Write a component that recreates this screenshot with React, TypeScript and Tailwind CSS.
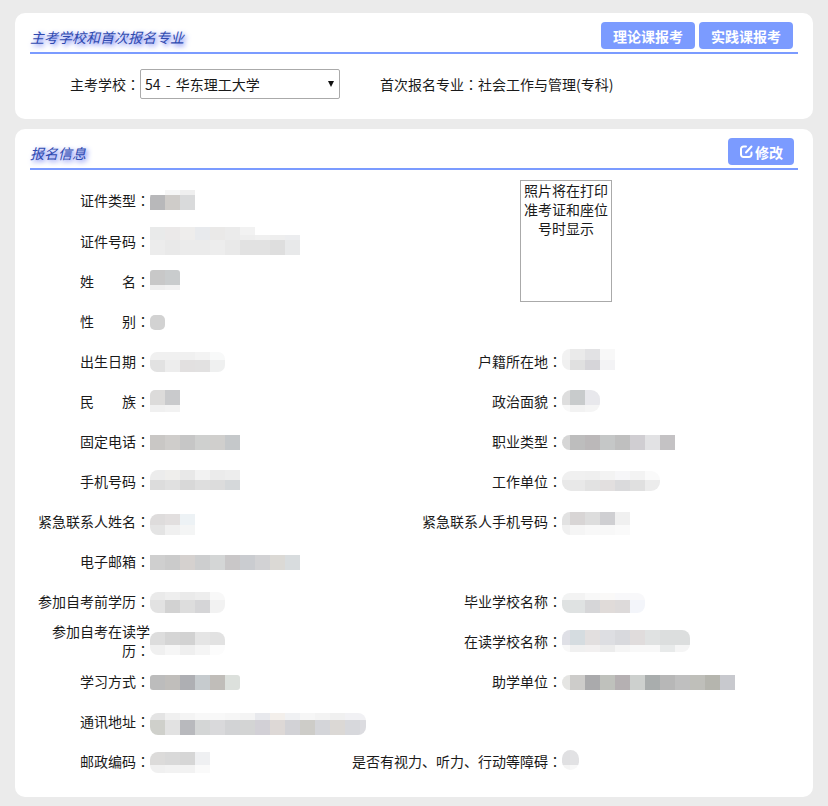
type BlurRow = [string, string];

interface FieldData {
  label: string;
  offset: string;
  rows: BlurRow[];
  shape?: string;
}

// pixelated values, one entry per mosaic row: height + cell colours
const leftFields: FieldData[] = [
  { label: "证件类型", offset: "mt-[10px]", shape: "rounded-tl-[8px]", rows: [["h-[5px]", "bg-[#ffffff] bg-[#f6f6f6] bg-[#efefef]"], ["h-[15px]", "bg-[#b8b8ba] bg-[#cfccc9] bg-[#d9dadb]"]] },
  { label: "证件号码", offset: "mt-[7px]", rows: [["h-[8px]", "bg-[#e9eaea] bg-[#ebe9e9] bg-[#eeedec] bg-[#e8eaed] bg-[#eae9e8] bg-[#ebebeb] bg-[#f2f2f2] bg-[#ffffff] bg-[#ffffff] bg-[#ffffff]"], ["h-[5px]", "bg-[#e9eaea] bg-[#ebe9e9] bg-[#eeedec] bg-[#e8eaed] bg-[#eae9e8] bg-[#ebebeb] bg-[#eeeeee] bg-[#f0f0f0] bg-[#eeeeee] bg-[#ecedef]"], ["h-[15px]", "bg-[#ececec] bg-[#e9e9e9] bg-[#ebebeb] bg-[#ebebeb] bg-[#ededed] bg-[#e9e9e9] bg-[#e2e2e2] bg-[#e2e2e2] bg-[#dedede] bg-[#e8e9ea]"]] },
  { label: "姓　　名", offset: "mt-[10px]", shape: "rounded-t-[3px]", rows: [["h-[15px]", "bg-[#c8c8c8] bg-[#c9cccd]"], ["h-[5px]", "bg-[#efefef] bg-[#f2f2f2]"]] },
  { label: "性　　别", offset: "mt-[15px]", shape: "rounded-[5px]", rows: [["h-[15px]", "bg-[#d2d2d2]"]] },
  { label: "出生日期", offset: "mt-[12px]", shape: "rounded-[7px]", rows: [["h-[8px]", "bg-[#f0f0f0] bg-[#f0f0f0] bg-[#f0f0f0] bg-[#f3f3f3] bg-[#f8f9f9]"], ["h-[12px]", "bg-[#e2e2e2] bg-[#ededed] bg-[#e2e0e0] bg-[#e2e1e1] bg-[#eff0f0]"]] },
  { label: "民　　族", offset: "mt-[10px]", shape: "rounded-tl-[5px]", rows: [["h-[15px]", "bg-[#dcdbda] bg-[#c9cacc]"], ["h-[7px]", "bg-[#f0f0f0] bg-[#f2f2f2]"]] },
  { label: "固定电话", offset: "mt-[15px]", shape: "rounded-none", rows: [["h-[15px]", "bg-[#c9c7c5] bg-[#cfcdcb] bg-[#c6c6c6] bg-[#cfd0cf] bg-[#d0cfcd] bg-[#c5c8ca]"]] },
  { label: "手机号码", offset: "mt-[10px]", shape: "rounded-tl-[8px]", rows: [["h-[10px]", "bg-[#ececec] bg-[#efeeec] bg-[#e8e8e8] bg-[#f2f2f2] bg-[#ebebeb] bg-[#ededed]"], ["h-[10px]", "bg-[#dcdcdc] bg-[#e0e0e0] bg-[#d8d8d8] bg-[#dedede] bg-[#dcdcdc] bg-[#d5d8da]"]] },
  { label: "紧急联系人姓名", offset: "mt-[14px]", shape: "rounded-l-[8px]", rows: [["h-[11px]", "bg-[#dedcdc] bg-[#e2dfdf] bg-[#edf2f5]"], ["h-[10px]", "bg-[#e4e4e4] bg-[#f0f0f0] bg-[#f4f5f5]"]] },
  { label: "电子邮箱", offset: "mt-[15px]", shape: "rounded-none", rows: [["h-[15px]", "bg-[#cfcfcf] bg-[#cbcbcb] bg-[#d5d1cf] bg-[#cdcecf] bg-[#d4d6d6] bg-[#c9c7c8] bg-[#caccd0] bg-[#d2d2d4] bg-[#dbd9d5] bg-[#d8dcde]"]] },
  { label: "参加自考前学历", offset: "mt-[12px]", shape: "rounded-[8px]", rows: [["h-[8px]", "bg-[#eaeaea] bg-[#eeeeee] bg-[#eaeaea] bg-[#ededed] bg-[#f8f8f8]"], ["h-[13px]", "bg-[#e2e2e2] bg-[#d2d2d2] bg-[#dddddd] bg-[#d5d5d7] bg-[#f2f2f2]"]] },
  { label: "参加自考在读学历", offset: "mt-[12px]", shape: "rounded-[8px]", rows: [["h-[13px]", "bg-[#dddddd] bg-[#d5d5d5] bg-[#d2d2d2] bg-[#e5e5e5] bg-[#e2e2e2]"], ["h-[10px]", "bg-[#f0f0f0] bg-[#f6f6f6] bg-[#efefef] bg-[#f5f5f5] bg-[#fcfcfc]"]] },
  { label: "学习方式", offset: "mt-[15px]", shape: "rounded-[3px]", rows: [["h-[15px]", "bg-[#bcbcbc] bg-[#c0bebb] bg-[#aeafb3] bg-[#c6cbce] bg-[#c0bdb9] bg-[#dce0dc]"]] },
  { label: "通讯地址", offset: "mt-[13px]", shape: "rounded-[8px] w-[216px]", rows: [["h-[7px]", "bg-[#e4e4e4] bg-[#f0f0f0] bg-[#f4f4f4] bg-[#f8f8f8] bg-[#f8f8f8] bg-[#f6f6f6] bg-[#f4f4f4] bg-[#e8e9ed] bg-[#f3efeb] bg-[#f0f1f3] bg-[#f6f6f6] bg-[#f3f3f3] bg-[#f0f0f0] bg-[#f1f1f4] bg-[#f1f1f4]"], ["h-[15px]", "bg-[#cfd0cb] bg-[#e2e2e2] bg-[#b8b9bd] bg-[#d4d6d6] bg-[#d9d9db] bg-[#d2d3d5] bg-[#d3d4d4] bg-[#d2d0d6] bg-[#ddd8d6] bg-[#d2d2d6] bg-[#cdccc8] bg-[#d4d5d9] bg-[#dbd8d5] bg-[#d7d8dc] bg-[#dcdce0]"]] },
  { label: "邮政编码", offset: "mt-[12px]", shape: "rounded-l-[8px]", rows: [["h-[13px]", "bg-[#dcdbda] bg-[#d9d9d9] bg-[#d6d6d6] bg-[#eff0f2]"], ["h-[8px]", "bg-[#f0f0f0] bg-[#f2f2f2] bg-[#f2f2f2] bg-[#fafafa]"]] },
];

const rightFields: (FieldData | null)[] = [
  { label: "户籍所在地", offset: "mt-[9px]", shape: "rounded-l-[8px]", rows: [["h-[11px]", "bg-[#f2f2f2] bg-[#eaeaea] bg-[#e2e2e4] bg-[#f8f8f8]"], ["h-[10px]", "bg-[#f0f0f0] bg-[#e0e0e0] bg-[#d6d5d9] bg-[#f3f3f5]"]] },
  { label: "政治面貌", offset: "mt-[10px]", shape: "rounded-[9px]", rows: [["h-[15px]", "bg-[#dedede] bg-[#c8cbcc] bg-[#e8e8ec]"], ["h-[7px]", "bg-[#f8f8f8] bg-[#f2f2f2] bg-[#f5f5f5]"]] },
  { label: "职业类型", offset: "mt-[15px]", shape: "rounded-l-[8px]", rows: [["h-[15px]", "bg-[#d6d6d6] bg-[#bdbdbd] bg-[#bbb8b9] bg-[#c5c7c7] bg-[#bfbfbf] bg-[#d0ced2] bg-[#e2e2e4] bg-[#c4c2c4]"]] },
  { label: "工作单位", offset: "mt-[11px]", shape: "rounded-[9px]", rows: [["h-[9px]", "bg-[#f0f0f0] bg-[#f0f0f0] bg-[#efefef] bg-[#f3f3f3] bg-[#f6f6f8] bg-[#f3f3f3] bg-[#fafafa]"], ["h-[11px]", "bg-[#e8e8e8] bg-[#e8e8e8] bg-[#e2e2e2] bg-[#e2dfdf] bg-[#dadadc] bg-[#e0e0e0] bg-[#ececec]"]] },
  { label: "紧急联系人手机号码", offset: "mt-[12px]", shape: "rounded-l-[8px]", rows: [["h-[13px]", "bg-[#e2e2e2] bg-[#d8d5d5] bg-[#dddddd] bg-[#cfcfd2] bg-[#f0f0f0]"], ["h-[10px]", "bg-[#f0f0f0] bg-[#f5f5f5] bg-[#f8f8f8] bg-[#f8f8f8] bg-[#fafafa]"]] },
  null,
  { label: "毕业学校名称", offset: "mt-[13px]", shape: "rounded-[8px]", rows: [["h-[7px]", "bg-[#f2f3f3] bg-[#f3f3f3] bg-[#f8f8f8] bg-[#faf9f8] bg-[#f8f8fa] bg-[#f8f8fa]"], ["h-[13px]", "bg-[#dfe2e2] bg-[#dfe2e2] bg-[#d6d6d8] bg-[#e0dbd9] bg-[#dddada] bg-[#f3f5fa]"]] },
  { label: "在读学校名称", offset: "mt-[10px]", shape: "rounded-[8px]", rows: [["h-[15px]", "bg-[#dfe0e6] bg-[#d5dce0] bg-[#e2dfdf] bg-[#dddee2] bg-[#d8d9dd] bg-[#e0dcdc] bg-[#e0e2e2] bg-[#dcdede] bg-[#dcdede]"], ["h-[7px]", "bg-[#f8f8f8] bg-[#f0f0f0] bg-[#f2f0f0] bg-[#ececec] bg-[#f5f5f5] bg-[#f8f8f8] bg-[#f8f8f8] bg-[#e8eaea] bg-[#f5f5f5]"]] },
  { label: "助学单位", offset: "mt-[15px]", shape: "rounded-l-[8px]", rows: [["h-[15px]", "bg-[#e5e5e3] bg-[#cdccca] bg-[#aaaaac] bg-[#bfc1bc] bg-[#b5b0b2] bg-[#cdd0ce] bg-[#a9adad] bg-[#b7b7b7] bg-[#bfbfbf] bg-[#bfbfba] bg-[#b5b5ae] bg-[#c8c9ce]"]] },
  null,
  { label: "是否有视力、听力、行动等障碍", offset: "mt-[10px]", shape: "rounded-full w-[17px]", rows: [["h-[15px]", "bg-[#e0e0e2] bg-[#e2e2e4]"], ["h-[5px]", "bg-[#f4f4f4] bg-[#f8f8f8]"]] },
];

function Mosaic({ field, narrowFirst }: { field: FieldData; narrowFirst?: boolean }) {
  return (
    <div className={`${field.offset} ${field.shape ?? "rounded-none"} overflow-hidden flex-none self-start`}>
      {field.rows.map(([height, colours], i) => (
        <div key={i} className={`flex ${height}`}>
          {colours.split(" ").map((colour, j) => (
            <div key={j} className={`${colour} flex-none ${narrowFirst && j === 0 ? "w-[8px]" : "w-[15px]"}`} />
          ))}
        </div>
      ))}
    </div>
  );
}

// the TC face centres the full-width colon in its cell, the SC one doesn't
function Colon() {
  return <span className="font-['Noto_Sans_CJK_TC',sans-serif]">：</span>;
}

function Title({ text }: { text: string }) {
  return <h2 className="mb-[2px] text-sm leading-5 italic text-[#2f4ab0] [text-shadow:2px_2px_5px_#5566ee]">{text}</h2>;
}

function Button({ children, className }: { children: React.ReactNode; className: string }) {
  return (
    <button className={`h-[27px] rounded-[4px] bg-[#7b9bff] text-white text-sm font-bold flex items-center justify-center ${className}`}>
      {children}
    </button>
  );
}

export default function App() {
  return (
    <div className="min-h-[806px] bg-[#ebebeb] px-[15px] pt-[13px] pb-[9px] text-sm text-[#1a1a1a] font-['Noto_Sans_CJK_SC','Liberation_Sans',sans-serif]">
      <section className="bg-white rounded-[10px] px-[15px] pb-[20px]">
        <div className="flex items-end justify-between h-[41px] pb-[3px] border-b-2 border-[#7b9bff]">
          <Title text="主考学校和首次报名专业" />
          <div className="flex gap-[4px] mr-[5px]">
            <Button className="w-[94px]">理论课报考</Button>
            <Button className="w-[94px]">实践课报考</Button>
          </div>
        </div>
        <div className="flex items-center pt-[15px]">
          <span className="w-[110px] text-right">主考学校<Colon /></span>
          <div className="relative w-[200px]">
            <select className="w-full h-[30px] pl-[4px] appearance-none border border-[#aaaaaa] rounded-[2px] bg-white text-sm [word-spacing:2px]">
              <option>54 - 华东理工大学</option>
            </select>
            <svg className="absolute right-[6px] top-[12px]" width="6" height="6" viewBox="0 0 6 6">
              <path d="M0 0h6L3 6z" fill="#111111" />
            </svg>
          </div>
          <span className="ml-[40px]">首次报名专业<Colon />社会工作与管理(专科)</span>
        </div>
      </section>

      <section className="mt-[10px] bg-white rounded-[10px] px-[15px] pb-[17px]">
        <div className="flex items-end justify-between h-[41px] pb-[3px] border-b-2 border-[#7b9bff]">
          <Title text="报名信息" />
          <Button className="w-[66px] mr-[4px] gap-[1px]">
            <svg width="15" height="15" viewBox="0 0 15 15" fill="none" stroke="currentColor" strokeWidth="2" strokeLinecap="round">
              <path d="M7 2.5H4.5A2.5 2.5 0 0 0 2 5v5.5A2.5 2.5 0 0 0 4.500 13H10a2.500 2.500 0 0 0 2.500-2.500V8.500" />
              <path d="M7 8.500l5.500-6" />
            </svg>
            修改
          </Button>
        </div>
        <div className="mt-[10px] grid grid-cols-[322px_1fr] auto-rows-[40px]">
          <div className="col-start-2 row-start-1 row-span-4 pl-[168px]">
            <div className="w-[92px] h-[122px] border border-[#aaaaaa] text-center leading-[19px] px-[2px]">
              照片将在打印准考证和座位号时显示
            </div>
          </div>
          {leftFields.map((field, i) => (
            <div key={field.label} className="col-start-1 flex items-center" style={{ gridRowStart: i + 1 }}>
              <span className={`w-[120px] flex-none text-right leading-[19px] ${i > 0 ? "pt-[2px]" : ""}`}>{field.label}<Colon /></span>
              <Mosaic field={field} />
            </div>
          ))}
          {rightFields.map((field, i) =>
            field ? (
              <div key={field.label} className="col-start-2 flex items-center" style={{ gridRowStart: i + 5 }}>
                <span className="w-[210px] flex-none text-right pt-[2px]">{field.label}<Colon /></span>
                <Mosaic field={field} narrowFirst />
              </div>
            ) : null
          )}
        </div>
      </section>
    </div>
  );
}
